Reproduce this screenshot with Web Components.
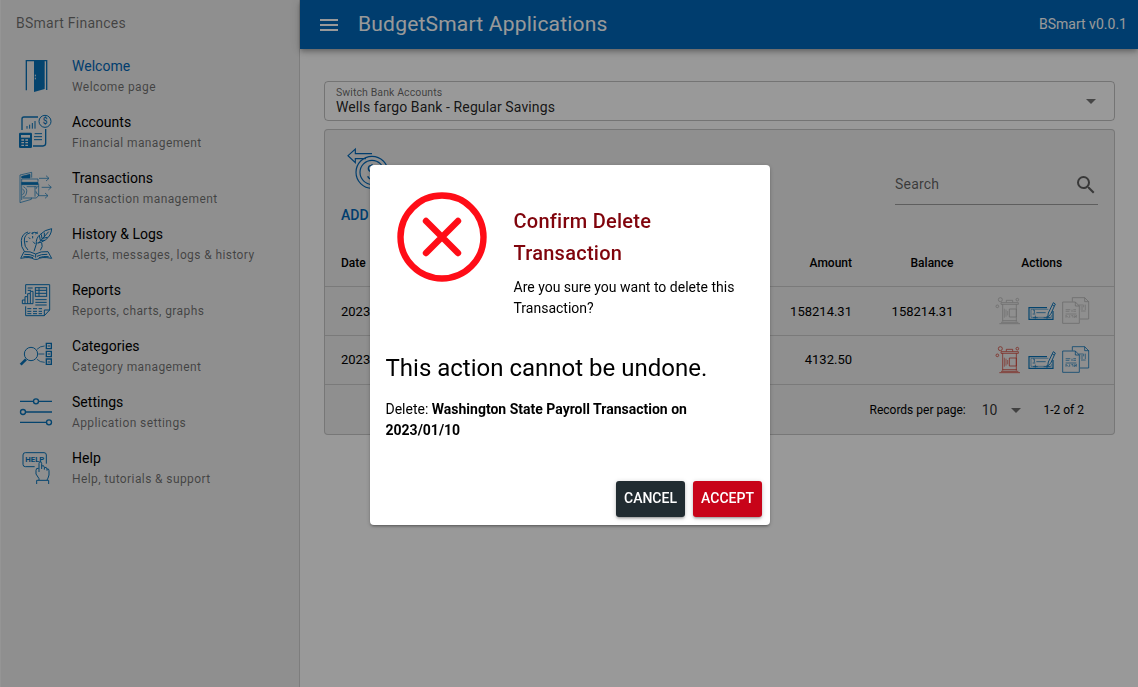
<!DOCTYPE html>
<html lang="en">
<head>
<meta charset="utf-8">
<title>BudgetSmart Applications</title>
<style>
  html, body { margin: 0; height: 100%; overflow: hidden; background: #fff; }
  body { font-family: Roboto, "Liberation Sans", sans-serif; font-size: 14px; color: #000; }
</style>
</head>
<body>
<bs-app></bs-app>
<script>
const define = (name, html, setup) => {
  const template = document.createElement('template');
  template.innerHTML = html;
  customElements.define(name, class extends HTMLElement {
    constructor() {
      super();
      this.attachShadow({ mode: 'open' }).append(template.content.cloneNode(true));
    }
    connectedCallback() { if (setup) setup(this, this.shadowRoot); }
  });
};

const ICONS = {
  door: [96, `<path d="M19 91V2H80V90" stroke-width="4"/><path d="M42 3H74V87L42 96z" fill="currentColor" stroke="none"/><path d="M46 44v5M46 53v5" stroke="#eee" stroke-width="3"/><path d="M72 8v8M72 70v9"/>`],
  accounts: [96, `<g stroke-width="4"><path d="M6 42V9Q6 3 12 3H54M77 39V82Q77 90 69 90H39"/><circle cx="75" cy="16" r="18" stroke-width="3"/><path d="M21 38V30M29 38V26M37 38V21M45 38V15" stroke-width="3"/><path d="M44 53H66M42 62H66M42 71H66" stroke-width="3"/></g><rect x="-3" y="50" width="39" height="46" rx="4" fill="currentColor" stroke="none"/><path d="M3 57H30V65H3z" fill="#eee" stroke="none"/><path d="M4 72h8M16 72h8M4 80h8M16 80h8M4 88h8M16 88h8" stroke="#eee" stroke-width="4"/><text x="75" y="25" font-size="25" font-weight="500" text-anchor="middle" fill="currentColor" stroke="none">$</text>`],
  transactions: [96, `<g stroke-width="2"><path d="M0 9L35 1V17M0 9V92L34 82V77"/><path d="M5 13L30 7V18H5zM5 31H54V38H5z" fill="currentColor"/><path d="M5 21H54V29M5 21V84M56 35V70L49 78H8M45 43V74M20 44h30M10 44q12 5 10 16q-2 14-12 15M7 51q7 3 6 9q-1 7-6 8M56 43q-8 1-8 8M56 68q-8-2-8-10"/><path d="M57 19H86M78 11L87 19L78 27M65 46H93M85 38L94 46L85 54M54 71H83M75 63L84 71L75 79"/></g>`],
  history: [96, `<g stroke-width="3"><path d="M24 12Q5 18 4 38Q2 57 13 70M31 14Q12 19 13 39Q13 57 24 66M34 16Q44 10 54 16M38 14V19M46 18l7-6M17 41h6M38 24v7M26 28l5 5M39 41l7 7M65 44Q70 56 61 67"/><path d="M95 2Q74 5 60 20Q47 31 49 48L42 70M95 2Q94 23 76 36Q63 45 52 45M86 11L55 46M58 22l3 15M64 19l2 13M73 14v12M61 37h13M67 31l16-3"/><path d="M2 91L12 71Q31 69 47 78Q62 69 84 71L95 91Q64 85 52 94H43Q31 85 2 91zM47 78V89M13 79q20-1 30 6M51 85q12-7 31-6M10 86q20-2 29 3M57 89q12-5 29-3"/></g>`],
  reports: [96, `<g stroke-width="3"><path d="M17 30V2H89V78L73 95H17V67M89 78H73V95"/><rect x="46" y="11" width="34" height="26"/><path d="M46 19H80M57 11V37M46 28H80"/><path d="M7 59V48H15V38H23V29H31V22H39V59zM15 48V59M23 38V59M31 29V59M23 12h15M23 19h10M46 47H80M46 55H80M46 63H80M22 74h12M39 74h12M56 74h10M22 82h12M39 82h12M56 82h10M22 89h12M39 89h12M56 89h10"/></g>`],
  categories: [96, `<g stroke-width="3"><circle cx="33" cy="42" r="20"/><path d="M18 58L2 74" stroke-width="8"/><path d="M51 28Q60 18 74 18M55 42H73M51 58Q60 67 74 67" stroke-width="2.5"/><path d="M79 10H94V26H79zM79 34H94V50H79zM79 57H94V73H79z" stroke-width="4"/><path d="M83 18h7M83 42h7M83 66h7" stroke-width="3"/></g>`],
  settings: [96, `<g stroke-width="4"><path d="M0 16H40M56 16H96M17 48H96M0 79H79"/><circle cx="48" cy="16" r="7.5"/><circle cx="9" cy="48" r="7.5"/><circle cx="87" cy="79" r="7.5"/></g>`],
  help: [96, `<g stroke-width="3"><path d="M44 44H16Q9 44 9 37V9Q9 2 16 2H72Q79 2 79 9V35"/><path d="M57 60V34Q57 30 61 30Q65 30 65 34V51M65 42Q72 38 73 46V53M73 47Q80 43 81 51V56M81 51Q87 49 87 56V69Q84 80 81 84M56 49Q48 47 48 55V66L57 80V84M50 96V85H86V96"/></g><text x="44.500" y="30" font-size="23" font-weight="700" textLength="57" lengthAdjust="spacingAndGlyphs" text-anchor="middle" fill="currentColor" stroke="none">HELP</text>`],
  money: [144, `<g stroke-width="3.500"><path d="M75 17H25V3L3 23L25 44V32H57"/><circle cx="75" cy="73" r="48"/><circle cx="75" cy="73" r="36"/></g><path d="M86 59q-4-8-12-7q-10 0-10 10q0 7 11 10q12 4 12 12q-2 10-12 10q-9 0-13-9M75 48v54" stroke-width="4"/>`],
  trash: [84, `<g stroke-width="2.200"><circle cx="19" cy="8" r="6"/><circle cx="70" cy="8" r="4"/><circle cx="10" cy="28" r="4"/><path d="M37 16V10H56V16M21 17H73V22H21zM26 22V74M67 22V74M46 36H67V60H46zM26 71H68M16 80H78M21 76H73"/><path d="M31 35V62M36 38V59M41 42V55" stroke-width="1.800"/></g>`],
  cheque: [84, `<path d="M57 32H3V67H75V42" stroke-width="3.500"/><path d="M61 37H9V61H70V54" stroke-width="1.500"/><path d="M76 17L82 21L68 52L59 60L61 48zM73 24l5 3" stroke-width="2.800"/><path d="M15 39h4v10M25 47H53M14 51H22M15 62H29M22 56V65M47 62H67M57 57V66" stroke-width="2.200"/>`],
  copies: [84, `<g stroke-width="2.300"><path d="M31 14V2H68L80 14V66H54M68 2V14H80M40 15H2V79H52V27zM40 15V27H52"/><path d="M11 38H25M30 38V45M34 38H42M11 43H22M34 43H42M11 51H43M12 55L19 62M12 62V55M23 55V62M28 56H33V62M38 55V62L43 55V62M50 24h13M56 30h7M65 23v8M70 23v16M56 36h7M57 42h14" stroke-width="1.900"/></g>`],
  menu: [24, `<path d="M3 18h18v-2H3v2zm0-5h18v-2H3v2zm0-7v2h18V6H3z" fill="currentColor" stroke="none"/>`],
  arrow: [24, `<path d="M7 10l5 5 5-5z" fill="currentColor" stroke="none"/>`],
  search: [24, `<path d="M15.500 14h-.79l-.28-.27A6.471 6.471 0 0 0 16 9.500 6.500 6.500 0 1 0 9.500 16c1.610 0 3.090-.59 4.230-1.570l.27.28v.79l5 4.990L20.490 19l-4.990-5zm-6 0C7.010 14 5 11.990 5 9.500S7.010 5 9.500 5 14 7.010 14 9.500 11.990 14 9.500 14z" fill="currentColor" stroke="none"/>`],
  cancel: [96, `<circle cx="48" cy="48" r="41.500" stroke-width="6.400"/><path d="M32 32L64 64M64 32L32 64" stroke-width="6.400" stroke-linecap="round"/>`]
};

define('bs-icon', `
  <style>
    :host { display: block; flex: none; width: var(--size, 24px); height: var(--size, 24px); }
    svg { display: block; width: 100%; height: 100%; overflow: visible; fill: none; stroke: currentColor; }
  </style><svg></svg>`, (el, root) => {
  const [box, art] = ICONS[el.getAttribute('name')];
  const svg = root.querySelector('svg');
  svg.setAttribute('viewBox', `0 0 ${box} ${box}`);
  svg.innerHTML = art;
});

define('bs-nav', `
  <style>
    :host { display: block; box-sizing: border-box; width: 300px; background: #eee; border-left: 1px solid #f8f8f8; border-right: 1px solid #d0d0d0; }
    .heading { height: 48px; box-sizing: border-box; padding: 15px 15px 0; line-height: 17px; letter-spacing: .25px; color: rgba(0,0,0,.54); }
    a { display: flex; align-items: center; height: 56px; padding-left: 19px; gap: 20px; --size: 32px; }
    bs-icon { color: #0872b8; }
    .words { padding-top: 2px; }
    .label { line-height: 17px; letter-spacing: .02px; }
    .caption { margin-top: 4px; font-size: 12px; line-height: 17px; letter-spacing: .4px; color: rgba(0,0,0,.54); }
    a.active .label { color: #0067b8; }
  </style>
  <div class="heading"><slot></slot></div><nav></nav>`, (el, root) => {
  const items = [
    ['door', 'Welcome', 'Welcome page'],
    ['accounts', 'Accounts', 'Financial management'],
    ['transactions', 'Transactions', 'Transaction management'],
    ['history', 'History &amp; Logs', 'Alerts, messages, logs &amp; history'],
    ['reports', 'Reports', 'Reports, charts, graphs'],
    ['categories', 'Categories', 'Category management'],
    ['settings', 'Settings', 'Application settings'],
    ['help', 'Help', 'Help, tutorials &amp; support']
  ];
  root.querySelector('nav').innerHTML = items.map(([icon, label, caption], i) =>
    `<a class="${i ? '' : 'active'}"><bs-icon name="${icon}"></bs-icon><div class="words"><div class="label">${label}</div><div class="caption">${caption}</div></div></a>`).join('');
});

define('bs-header', `
  <style>
    :host { display: flex; align-items: center; box-sizing: border-box; height: 49px; padding: 0 11px 0 17px; background: #0067b8; color: #fff;
      box-shadow: 0 2px 4px -1px rgba(0,0,0,.2), 0 4px 5px rgba(0,0,0,.14), 0 1px 10px rgba(0,0,0,.12); position: relative; }
    .title { flex: 1; padding-left: 17px; font-size: 21px; letter-spacing: .21px; line-height: 47px; }
    .version { line-height: 17px; padding-bottom: 1px; letter-spacing: .02px; }
    bs-icon { margin-top: 1px; }
  </style>
  <bs-icon name="menu"></bs-icon><div class="title"><slot></slot></div><div class="version"><slot name="version"></slot></div>`);

define('bs-select', `
  <style>
    :host { display: flex; align-items: center; box-sizing: border-box; height: 40px; padding: 0 11px; border: 1px solid rgba(0,0,0,.24); border-radius: 4px; }
    .text { flex: 1; }
    .label { font-size: 10.500px; line-height: 13px; letter-spacing: .1px; color: rgba(0,0,0,.6); }
    .value { line-height: 17px; letter-spacing: .11px; color: rgba(0,0,0,.87); }
    bs-icon { color: rgba(0,0,0,.54); }
  </style>
  <div class="text"><div class="label"><slot name="label"></slot></div><div class="value"><slot></slot></div></div>
  <bs-icon name="arrow"></bs-icon>`);

define('bs-table', `
  <style>
    :host { display: block; box-sizing: border-box; height: 306px; background: #eee; border: 1px solid rgba(0,0,0,.16); border-radius: 4px; }
    .top { display: flex; justify-content: space-between; align-items: flex-start; height: 110px; padding: 0 16px; }
    .add { padding-top: 18px; color: #0067b8; font-weight: 500; }
    .add bs-icon { --size: 48px; margin-left: 5.500px; }
    .add div { margin-top: 11px; line-height: 17px; }
    .search { display: flex; align-items: center; justify-content: space-between; box-sizing: border-box; width: 203px; height: 41px; margin-top: 34px; border-bottom: 1px solid rgba(0,0,0,.34); color: rgba(0,0,0,.6); letter-spacing: .2px; }
    .search bs-icon { margin-top: 2px; }
    .row { display: grid; grid-template-columns: 411px 100px 101.500px 1fr; height: 49px; box-sizing: border-box; align-items: center; padding: 0 24px 0 16px; border-bottom: 1px solid rgba(0,0,0,.14); font-size: 13px; }
    .row > :nth-child(2), .row > :nth-child(3) { text-align: right; }
    .row.last > span { padding-bottom: 2px; }
    .head { height: 47px; font-size: 12px; font-weight: 500; }
    .head > :last-child { text-align: center; padding-left: 40px; }
    .actions { display: flex; justify-content: flex-end; gap: 6px; --size: 28px; color: #0872b8; }
    .danger { color: #d03a2c; }
    .off { color: #b2b2b2; }
    .foot { display: flex; align-items: center; justify-content: flex-end; height: 50px; padding-right: 30px; font-size: 12px; }
    .foot .count { margin-left: 16px; font-size: 14px; color: rgba(0,0,0,.8); }
    .foot bs-icon { margin: 0 15.500px 0 6.500px; color: rgba(0,0,0,.54); }
  </style>
  <div class="top">
    <div class="add"><bs-icon name="money"></bs-icon><div>ADD</div></div>
    <div class="search"><span>Search</span><bs-icon name="search"></bs-icon></div>
  </div>
  <div class="row head"><span>Date</span><span>Amount</span><span>Balance</span><span>Actions</span></div>
  <div class="row"><span>2023</span><span>158214.31</span><span>158214.31</span>
    <div class="actions"><bs-icon class="off" name="trash"></bs-icon><bs-icon name="cheque"></bs-icon><bs-icon class="off" name="copies"></bs-icon></div></div>
  <div class="row last"><span>2023</span><span>4132.50</span><span></span>
    <div class="actions"><bs-icon class="danger" name="trash"></bs-icon><bs-icon name="cheque"></bs-icon><bs-icon name="copies"></bs-icon></div></div>
  <div class="foot"><span>Records per page:</span><span class="count">10</span><bs-icon name="arrow"></bs-icon><span>1-2 of 2</span></div>`);

define('bs-button', `
  <style>
    :host { display: grid; place-items: center; box-sizing: border-box; width: 69px; height: 36px; padding-bottom: 2px; border-radius: 3px; color: #fff; font-weight: 500; line-height: 24px; background: #212c31;
      box-shadow: 0 1px 5px rgba(0,0,0,.2), 0 2px 2px rgba(0,0,0,.14), 0 3px 1px -2px rgba(0,0,0,.12); }
    :host([negative]) { background: #c80419; }
  </style><span><slot></slot></span>`);

define('bs-dialog', `
  <style>
    :host { position: fixed; inset: 0; display: grid; place-items: center; padding: 3px 0 0 2px; background: rgba(0,0,0,.4); z-index: 10; }
    section { display: flex; flex-direction: column; box-sizing: border-box; width: 400px; height: 360px; padding: 24px 8px 8px 15.500px; border-radius: 4px; background: #fff;
      box-shadow: 0 1px 5px rgba(0,0,0,.2), 0 2px 2px rgba(0,0,0,.14), 0 3px 1px -2px rgba(0,0,0,.12); }
    .top { display: flex; height: 163px; padding-left: 8px; }
    bs-icon { --size: 96px; color: #ff0d17; }
    .words { padding: 16px 0 0 24px; width: 226px; line-height: 21px; }
    h2 { margin: 0 0 8px; font-size: 20px; line-height: 32px; font-weight: 500; letter-spacing: .25px; color: #80040c; }
    h5 { margin: 0; font-size: 24px; line-height: 32px; font-weight: 400; }
    p { margin: 15px 0 0; width: 340px; line-height: 21px; }
    footer { display: flex; justify-content: flex-end; gap: 8px; margin-top: auto; }
  </style>
  <section>
    <div class="top"><bs-icon name="cancel"></bs-icon>
      <div class="words"><h2><slot name="title"></slot></h2><slot name="message"></slot></div></div>
    <h5><slot name="warning"></slot></h5>
    <p><slot></slot></p>
    <footer><slot name="actions"></slot></footer>
  </section>`);

define('bs-app', `
  <style>
    :host { display: grid; grid-template-columns: 300px 1fr; height: 100vh; }
    .content { display: flex; flex-direction: column; gap: 8px; padding: 32px 23px 0 24px; }
    b { font-weight: 700; }
  </style>
  <bs-nav>BSmart Finances</bs-nav>
  <main>
    <bs-header>BudgetSmart Applications<span slot="version">BSmart v0.0.1</span></bs-header>
    <div class="content">
      <bs-select><span slot="label">Switch Bank Accounts</span>Wells fargo Bank - Regular Savings</bs-select>
      <bs-table></bs-table>
    </div>
  </main>
  <bs-dialog>
    <span slot="title">Confirm Delete Transaction</span>
    <span slot="message">Are you sure you want to delete this Transaction?</span>
    <span slot="warning">This action cannot be undone.</span>
    Delete: <b>Washington State Payroll Transaction on</b><br><b>2023/01/10</b>
    <bs-button slot="actions">CANCEL</bs-button>
    <bs-button slot="actions" negative>ACCEPT</bs-button>
  </bs-dialog>`);
</script>
</body>
</html>
